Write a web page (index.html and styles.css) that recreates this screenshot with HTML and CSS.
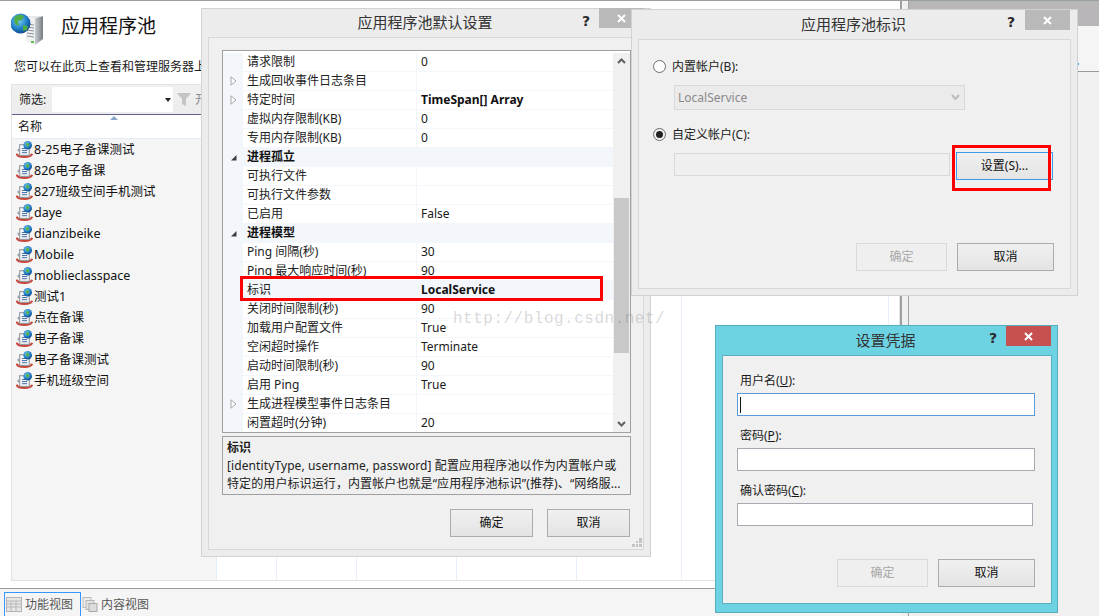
FILE: index.html
```html
<!DOCTYPE html>
<html lang="zh">
<head>
<meta charset="utf-8">
<title>应用程序池</title>
<link rel="stylesheet" href="styles.css">
</head>
<body>
<svg class="defs" width="0" height="0" aria-hidden="true">
  <defs>
    <radialGradient id="globe" cx="40%" cy="35%" r="70%">
      <stop offset="0" stop-color="#7fd0f0"/><stop offset=".6" stop-color="#1f7fc8"/><stop offset="1" stop-color="#0d3f86"/>
    </radialGradient>
    <linearGradient id="tower" x1="0" x2="1" y1="0" y2="0">
      <stop offset="0" stop-color="#c8ccd0"/><stop offset="1" stop-color="#767d82"/>
    </linearGradient>
    <symbol id="pool" viewBox="0 0 16 16">
      <path d="M.8 12c.5 4 13.400 4 14.400 0" fill="none" stroke="#c8463a" stroke-width="2"/>
      <rect x="3.500" y="3.500" width="9" height="10" fill="#fbfbfb" stroke="#8b9098"/>
      <rect x="5.500" y="6.500" width="5" height="1" fill="#4a6fa8"/>
      <rect x="5.500" y="8.500" width="5" height="1" fill="#4a6fa8"/>
      <rect x="5.500" y="10.500" width="5" height="1" fill="#4a6fa8"/>
      <circle cx="11" cy="4" r="4" fill="url(#globe)"/>
      <path d="M9 3c1-1.300 2.500-1.500 3.500-.5l-.5 2.500-1.500.5z" fill="#58b04a"/>
      <path d="M1 8.500l2.500-2.500v5z" fill="#9aa0a8"/>
    </symbol>
    <symbol id="closex" viewBox="0 0 9 9">
      <path d="M1 1l7 7M8 1l-7 7" stroke="#fff" stroke-width="2" fill="none"/>
    </symbol>
    <symbol id="tri-open" viewBox="0 0 7 10">
      <path d="M1 .8v8.400l5-4.200z" fill="#fff" stroke="#a8a8a8"/>
    </symbol>
    <symbol id="tri-down" viewBox="0 0 7 7">
      <path d="M6.500 1v5.500h-5.500z" fill="#3c3c3c"/>
    </symbol>
  </defs>
</svg>

<div class="desktop">
  <div class="app">
    <div class="left">
      <main class="main">
        <header class="page-head">
          <svg class="page-icon" width="34" height="34" viewBox="0 0 34 34">
            <path d="M24 6l8-2v23l-8 6z" fill="url(#tower)"/>
            <path d="M15 4l17 0-8 2.500z" fill="#e4e6e8"/>
            <path d="M15 4l9 2.500V33l-9-4z" fill="#eef0f1"/>
            <path d="M16 12l7 1M16 15l7 1M16 18l7 1M16 21l7 1M16 24l7 1" stroke="#8e9499"/>
            <rect x="20" y="29" width="3" height="2" fill="#5cc04a"/>
            <circle cx="9.500" cy="11.500" r="10" fill="url(#globe)"/>
            <path d="M3 6c3-4 7-4 10-2l-2 4-4 1 1 5-4-2z" fill="#4fae45"/>
            <path d="M12 13l5 1-1 4-4 1z" fill="#4fae45"/>
          </svg>
          <h1 class="page-title">应用程序池</h1>
        </header>
        <p class="page-sub">您可以在此页上查看和管理服务器上的应用程序池列表。</p>
        <section class="panel">
          <div class="filter">
            <span class="filter-label">筛选:</span>
            <div class="filter-box"><span class="filter-arrow"></span></div>
            <svg class="funnel" width="14" height="13" viewBox="0 0 14 13"><path d="M0 0h14l-5 6v7l-4-2v-5z" fill="#c4c4c4"/></svg>
            <span class="filter-go">开始</span>
          </div>
          <div class="list-head">
            <span class="sort-arrow"></span>
            <span>名称</span>
          </div>
          <div class="list-body">
            <ul class="pool-list">
              <li class="pool-row"><svg class="pool-icon"><use href="#pool"/></svg>8-25电子备课测试</li>
              <li class="pool-row"><svg class="pool-icon"><use href="#pool"/></svg>826电子备课</li>
              <li class="pool-row"><svg class="pool-icon"><use href="#pool"/></svg>827班级空间手机测试</li>
              <li class="pool-row"><svg class="pool-icon"><use href="#pool"/></svg>daye</li>
              <li class="pool-row"><svg class="pool-icon"><use href="#pool"/></svg>dianzibeike</li>
              <li class="pool-row"><svg class="pool-icon"><use href="#pool"/></svg>Mobile</li>
              <li class="pool-row"><svg class="pool-icon"><use href="#pool"/></svg>moblieclasspace</li>
              <li class="pool-row"><svg class="pool-icon"><use href="#pool"/></svg>测试1</li>
              <li class="pool-row"><svg class="pool-icon"><use href="#pool"/></svg>点在备课</li>
              <li class="pool-row"><svg class="pool-icon"><use href="#pool"/></svg>电子备课</li>
              <li class="pool-row"><svg class="pool-icon"><use href="#pool"/></svg>电子备课测试</li>
              <li class="pool-row"><svg class="pool-icon"><use href="#pool"/></svg>手机班级空间</li>
            </ul>
            <div class="col c1"></div><div class="col c2"></div><div class="col c3"></div><div class="col c4"></div><div class="col c5"></div><div class="col c6"></div>
          </div>
        </section>
      </main>
      <footer class="status">
        <div class="tab tab-active">
          <svg width="16" height="15" viewBox="0 0 16 15"><rect x=".5" y=".5" width="15" height="14" fill="#e6e6e6" stroke="#b4b4b4"/><path d="M1 4h14M5 4v10M10 4v10M1 7h14M1 10h14" stroke="#b8b8b8"/></svg>
          功能视图
        </div>
        <div class="tab">
          <svg width="16" height="15" viewBox="0 0 16 15"><rect x="1" y=".5" width="8" height="10" fill="#ececec" stroke="#bcbcbc"/><rect x="4" y="3.500" width="8" height="9" fill="#e4e4e4" stroke="#b4b4b4"/><rect x="7" y="6.500" width="8" height="8" fill="#dcdcdc" stroke="#aaa"/></svg>
          内容视图
        </div>
      </footer>
    </div>
    <div class="splitter"></div>
    <aside class="actions">
      <div class="actions-title">操作</div>
      <div class="actions-top"><span class="actions-dot"></span></div>
      <div class="actions-rest"></div>
    </aside>
  </div>

  <section class="dialog d1">
    <div class="dlg-title">应用程序池默认设置
      <span class="help">?</span>
      <span class="close close-idle d1-close"><svg width="9" height="9"><use href="#closex"/></svg></span>
    </div>
    <div class="dlg-body d1-body">
      <div class="grid">
        <div class="grid-rows">
          <div class="row"><span class="gut"></span><span class="name">请求限制</span><span class="val">0</span></div>
          <div class="row"><span class="gut"><svg width="7" height="10"><use href="#tri-open"/></svg></span><span class="name">生成回收事件日志条目</span><span class="val"></span></div>
          <div class="row"><span class="gut"><svg width="7" height="10"><use href="#tri-open"/></svg></span><span class="name">特定时间</span><span class="val strong">TimeSpan[] Array</span></div>
          <div class="row"><span class="gut"></span><span class="name">虚拟内存限制(KB)</span><span class="val">0</span></div>
          <div class="row"><span class="gut"></span><span class="name">专用内存限制(KB)</span><span class="val">0</span></div>
          <div class="row section"><span class="gut"><svg width="7" height="7"><use href="#tri-down"/></svg></span><span class="name">进程孤立</span></div>
          <div class="row"><span class="gut"></span><span class="name">可执行文件</span><span class="val"></span></div>
          <div class="row"><span class="gut"></span><span class="name">可执行文件参数</span><span class="val"></span></div>
          <div class="row"><span class="gut"></span><span class="name">已启用</span><span class="val">False</span></div>
          <div class="row section"><span class="gut"><svg width="7" height="7"><use href="#tri-down"/></svg></span><span class="name">进程模型</span></div>
          <div class="row"><span class="gut"></span><span class="name">Ping 间隔(秒)</span><span class="val">30</span></div>
          <div class="row"><span class="gut"></span><span class="name">Ping 最大响应时间(秒)</span><span class="val">90</span></div>
          <div class="row selected"><span class="gut"></span><span class="name">标识</span><span class="val strong">LocalService</span></div>
          <div class="row"><span class="gut"></span><span class="name">关闭时间限制(秒)</span><span class="val">90</span></div>
          <div class="row"><span class="gut"></span><span class="name">加载用户配置文件</span><span class="val">True</span></div>
          <div class="row"><span class="gut"></span><span class="name">空闲超时操作</span><span class="val">Terminate</span></div>
          <div class="row"><span class="gut"></span><span class="name">启动时间限制(秒)</span><span class="val">90</span></div>
          <div class="row"><span class="gut"></span><span class="name">启用 Ping</span><span class="val">True</span></div>
          <div class="row"><span class="gut"><svg width="7" height="10"><use href="#tri-open"/></svg></span><span class="name">生成进程模型事件日志条目</span><span class="val"></span></div>
          <div class="row"><span class="gut"></span><span class="name">闲置超时(分钟)</span><span class="val">20</span></div>
        </div>
        <div class="scrollbar">
          <svg class="sb-arrow" width="9" height="6" viewBox="0 0 9 6"><path d="M1 5l3.500-3.500L8 5" fill="none" stroke="#606060" stroke-width="2"/></svg>
          <div class="sb-thumb"></div>
          <svg class="sb-arrow" width="9" height="6" viewBox="0 0 9 6"><path d="M1 1l3.500 3.500L8 1" fill="none" stroke="#606060" stroke-width="2"/></svg>
        </div>
      </div>
      <div class="desc">
        <div class="desc-title">标识</div>
        <div class="desc-line">[identityType, username, password] 配置应用程序池以作为内置帐户或</div>
        <div class="desc-line">特定的用户标识运行，内置帐户也就是“应用程序池标识”(推荐)、“网络服...</div>
      </div>
      <div class="actions-row d1-actions">
        <button class="btn b83">确定</button>
        <button class="btn b83">取消</button>
      </div>
      <svg class="grip" width="10" height="9" viewBox="0 0 10 9"><path d="M7 0h3v3h-3zM4 3h2v2h-2zM7 3h3v2h-3zM0 6h3v3h-3zM4 6h2v3h-2zM7 6h3v3h-3z" fill="#c4c4c4"/></svg>
    </div>
  </section>

  <section class="dialog d2">
    <div class="dlg-title d2-title">应用程序池标识
      <span class="help">?</span>
      <span class="close close-idle"><svg width="9" height="9"><use href="#closex"/></svg></span>
    </div>
    <div class="dlg-body d2-body">
      <label class="radio-row"><span class="radio"></span>内置帐户(B):</label>
      <div class="select">LocalService
        <svg width="9" height="7" viewBox="0 0 9 7"><path d="M1 1l3.500 4L8 1" fill="none" stroke="#bcbcbc" stroke-width="2"/></svg>
      </div>
      <label class="radio-row radio-second"><span class="radio on"></span>自定义帐户(C):</label>
      <div class="custom-row">
        <div class="custom-box"></div>
        <button class="btn set-btn">设置(S)...</button>
      </div>
      <div class="actions-row d2-actions">
        <button class="btn b91 off">确定</button>
        <button class="btn b97">取消</button>
      </div>
    </div>
  </section>

  <section class="dialog d3">
    <div class="dlg-title d3-title">设置凭据
      <span class="help">?</span>
      <span class="close close-red"><svg width="9" height="9"><use href="#closex"/></svg></span>
    </div>
    <div class="dlg-body d3-body">
      <div class="f-label">用户名(<u>U</u>):</div>
      <div class="field focus"><span class="caret"></span></div>
      <div class="f-label">密码(<u>P</u>):</div>
      <div class="field"></div>
      <div class="f-label">确认密码(<u>C</u>):</div>
      <div class="field narrow"></div>
      <div class="actions-row d3-actions">
        <button class="btn b91 off">确定</button>
        <button class="btn b97">取消</button>
      </div>
    </div>
  </section>

  <div class="mark mark-row"></div>
  <div class="mark mark-set"></div>
  <div class="watermark">http://blog.csdn.net/</div>
</div>
</body>
</html>
```

FILE: styles.css
```css
* { box-sizing: border-box; }
html, body { margin: 0; padding: 0; }
body {
  width: 1099px;
  height: 616px;
  overflow: hidden;
  font: 12px/19px "Noto Sans", "Noto Sans CJK SC", sans-serif;
  color: #1a1a1a;
  background: #f2f2f2;
}
.defs { position: absolute; }
.desktop { position: relative; width: 1099px; height: 616px; overflow: hidden; }

/* background application */
.app { display: flex; height: 616px; border-top: 1px solid #9aa09a; }
.left { width: 902px; display: flex; flex-direction: column; }
.main { height: 592px; background: #fff; border-right: 2px solid #a0a0a0; border-bottom: 1px solid #999; padding: 11px 0 0 11px; overflow: hidden; }
.page-head { display: flex; align-items: center; height: 34px; }
.page-icon { flex: none; }
.page-title { margin: 0 0 6px 16px; font-size: 19px; font-weight: 400; line-height: 28px; color: #111; }
.page-sub { margin: 11px 0 8px 3px; height: 19px; white-space: nowrap; }
.panel { width: 889px; height: 497px; border: 1px solid #e2e2e2; border-top: 0; }
.filter { display: flex; align-items: center; height: 31px; background: linear-gradient(#f0f0f0, #ececec); border-top: 1px solid #e2e2e2; border-bottom: 1px solid #5f5f8c; padding-left: 7px; }
.filter-label { width: 33px; }
.filter-box { position: relative; width: 121px; height: 25px; background: #fff; }
.filter-arrow { position: absolute; left: 113px; top: 11px; border: 3px solid transparent; border-top: 4px solid #222; border-bottom: 0; }
.funnel { margin-left: 4px; }
.filter-go { margin-left: 4px; color: #8a8a8a; }
.list-head { position: relative; height: 24px; padding: 2px 0 0 6px; background: #fff; border-bottom: 1px solid #e3edf8; line-height: 20px; }
.sort-arrow { position: absolute; left: 98px; top: 1px; border: 4px solid transparent; border-bottom: 4px solid #8aa6c8; border-top: 0; }
.list-body { position: relative; height: 441px; background: #fff; }
.pool-list { position: relative; list-style: none; margin: 0; padding: 0; width: 205px; height: 100%; background: #f5f5f5; border-right: 1px solid #e3edf8; }
.pool-row { display: flex; align-items: center; height: 21px; padding-left: 4px; font-size: 12.500px; color: #111; }
.pool-icon { width: 17px; height: 17px; flex: none; margin-right: 1px; }
.col { position: absolute; top: 0; bottom: 0; width: 1px; background: #e8eff8; }
.c1 { left: 264px; } .c2 { left: 344px; } .c3 { left: 444px; } .c4 { left: 564px; } .c5 { left: 669px; } .c6 { left: 876px; }
.status { flex: 1; display: flex; gap: 1px; align-items: flex-start; padding: 3px 0 0 4px; background: #f5f5f5; color: #555; }
.tab { display: flex; align-items: center; gap: 3px; height: 24px; padding: 0 0 0 1px; font-size: 12px; }
.tab-active { width: 77px; border: 1px solid #3399ff; border-bottom: 0; }
.tab:not(.tab-active) { padding-left: 0; }
.splitter { width: 6px; background: #f0f0f0; }
.actions { flex: 1; border-left: 1px solid #a0a0a0; display: flex; flex-direction: column; }
.actions-title { height: 25px; background: #b8b6b8; padding: 6px 0 0 8px; color: #111; font-size: 12px; line-height: 18px; overflow: hidden; }
.actions-top { position: relative; height: 46px; background: #f5f5f5; border-bottom: 1px solid #999; }
.actions-dot { position: absolute; right: 20px; top: 37px; width: 2px; height: 2px; background: #4aa8e0; }
.actions-rest { flex: 1; background: #f0f0f0; }

/* dialogs */
.dialog { position: absolute; background: #ececec; border: 1px solid #d2d2d2; }
.dlg-title { position: relative; text-align: center; font-size: 15px; line-height: 27px; height: 28px; padding-right: 2px; color: #333; }
.help { position: absolute; top: 0; font: 700 14px/18px "DejaVu Sans", sans-serif; color: #2a2a2a; }
.close { position: absolute; top: 0; width: 45px; height: 20px; display: flex; align-items: center; justify-content: center; }
.close-idle { background: #b9b9b9; }
.close-red { background: #c75050; }
.dlg-body { position: relative; background: #f0f0f0; border: 1px solid #d8d8d8; }

.d1 { left: 201px; top: 8px; width: 450px; height: 549px; padding: 0 6px 6px 6px; }
.d1 .help { left: 374px; top: 3px; }
.d1-close { left: 391px; top: -1px; }
.d1-body { height: 513px; padding: 12px 12px 0 13px; }
.grid { display: flex; height: 383px; width: 409px; border: 1px solid #a0a0a0; overflow: hidden; background: #fff; padding-top: 2px; }
.grid-rows { width: 390px; flex: none; }
.row { display: flex; height: 19px; border-bottom: 1px solid #f3f6fa; line-height: 18px; }
.gut { width: 20px; flex: none; background: #f3f6fa; display: flex; align-items: center; justify-content: center; }
.name { width: 174px; flex: none; padding-left: 4px; border-right: 1px solid #f3f6fa; white-space: nowrap; color: #222; }
.val { flex: 1; padding-left: 4px; white-space: nowrap; }
.strong { font-weight: 700; color: #111; }
.section { background: #f3f6fa; }
.section .name { font-weight: 700; border-right: 0; color: #111; }
.selected { background: #f3f6fa; }
.scrollbar { flex: 1; background: #f0f0f0; display: flex; flex-direction: column; align-items: center; padding-top: 5px; }
.sb-thumb { width: 15px; height: 155px; background: #c8c8c8; margin: 134px 0 68px; }
.desc { height: 59px; width: 409px; margin-top: 3px; border: 1px solid #a0a0a0; padding: 2px 3px 0 4px; line-height: 18px; white-space: nowrap; overflow: hidden; color: #222; }
.desc-title { font-weight: 700; }
.desc-line { letter-spacing: .1px; }
.actions-row { display: flex; justify-content: flex-end; }
.d1-actions { margin-top: 14px; gap: 14px; width: 408px; }
.btn { font: 12px/1 "Noto Sans", "Noto Sans CJK SC", sans-serif; color: #111; height: 28px; padding: 0; background: linear-gradient(#f0f0f0, #e4e4e4); border: 1px solid #acacac; }
.b83 { width: 83px; }
.b91 { width: 91px; }
.b97 { width: 97px; }
.off { background: #efefef; border-color: #d9d9d9; color: #a8a8a8; }
.grip { position: absolute; right: 1px; bottom: 2px; }

.d2 { left: 631px; top: 9px; width: 447px; height: 287px; padding: 0 6px 6px 6px; }
.d2-title { height: 29px; line-height: 28px; }
.d2 .help { left: 369px; top: 3px; }
.d2 .close { left: 387px; }
.d2-body { height: 250px; width: 433px; padding: 16px 0 0 14px; }
.radio-row { display: flex; align-items: center; height: 20px; gap: 6px; color: #222; }
.radio { width: 13px; height: 13px; border: 1px solid #6e6e6e; border-radius: 50%; background: #fff; flex: none; display: flex; align-items: center; justify-content: center; }
.radio.on::after { content: ""; width: 7px; height: 7px; border-radius: 50%; background: #222; }
.radio.on { background: #f0f0f0; }
.select { display: flex; align-items: center; justify-content: space-between; width: 291px; height: 25px; margin: 9px 0 0 21px; padding: 0 4px 0 3px; background: #ebebeb; border: 1px solid #d9d9d9; color: #8a8a8a; }
.radio-second { margin-top: 14px; }
.custom-row { display: flex; gap: 6px; margin: 8px 0 0 21px; }
.custom-box { width: 276px; height: 23px; margin-top: 1px; background: #efefef; border: 1px solid #d9d9d9; }
.set-btn { width: 97px; height: 28px; border-color: #3d9be9; }
.d2-actions { margin-top: 63px; gap: 10px; width: 401px; }

.d3 { left: 715px; top: 325px; width: 343px; height: 288px; background: #6dd3e3; border: 1px solid #56aebd; padding: 0 6px 7px 6px; }
.d3-title { height: 29px; line-height: 28px; }
.d3 .help { left: 267px; top: 3px; }
.d3 .close { left: 284px; }
.d3-body { height: 249px; width: 330px; padding: 16px 0 0 14px; border: 1px solid #5ab0c0; }
.f-label { height: 18px; margin-left: 3px; line-height: 17px; }
.field { position: relative; width: 298px; height: 23px; margin-top: 3px; margin-bottom: 11px; background: #fff; border: 1px solid #a8a8b0; }
.focus { border-color: #5b9bd8; }
.narrow { width: 296px; }
.caret { position: absolute; left: 2px; top: 3px; width: 1px; height: 16px; background: #111; }
.d3-actions { margin-top: 33px; gap: 10px; width: 298px; }

.mark { position: absolute; border: 3px solid #f00; }
.mark-row { left: 240px; top: 276px; width: 363px; height: 25px; }
.mark-set { left: 952px; top: 145px; width: 99px; height: 46px; }
.watermark { position: absolute; left: 453px; top: 309px; font: 16px/20px "Liberation Mono", monospace; letter-spacing: .5px; color: rgba(90, 90, 90, .24); white-space: nowrap; }
```
